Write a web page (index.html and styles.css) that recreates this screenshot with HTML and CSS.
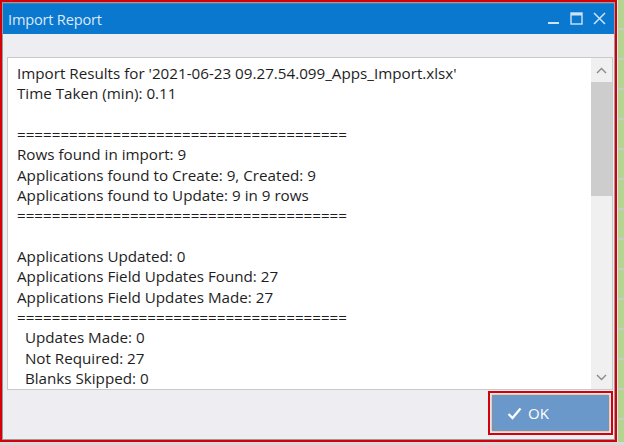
FILE: index.html
```
<!DOCTYPE html>
<html>
<head>
  <title>Import Report</title>
  <link rel="stylesheet" href="styles.css">
</head>
<body>
  <div class="screen">
    <div class="window">
      <div class="titlebar">
        <span class="title">Import Report</span>
        <div class="controls">
          <svg width="12" height="14" viewBox="0 0 12 14"><rect x="0" y="10" width="11" height="2" fill="#cfe3f6"/></svg>
          <svg width="13" height="14" viewBox="0 0 13 14"><rect x="1" y="1" width="11" height="11" fill="none" stroke="#cfe3f6" stroke-width="1.4"/><rect x="1" y="1" width="11" height="2.5" fill="#cfe3f6"/></svg>
          <svg width="13" height="14" viewBox="0 0 13 14"><path d="M1 1 L12 12 M12 1 L1 12" stroke="#cfe3f6" stroke-width="1.5"/></svg>
        </div>
      </div>

      <div class="body">
        <div class="report">
          <div class="report-text">Import Results for '2021-06-23 09.27.54.099_Apps_Import.xlsx'
Time Taken (min): 0.11

======================================
Rows found in import: 9
Applications found to Create: 9, Created: 9
Applications found to Update: 9 in 9 rows
======================================

Applications Updated: 0
Applications Field Updates Found: 27
Applications Field Updates Made: 27
======================================
  Updates Made: 0
  Not Required: 27
  Blanks Skipped: 0</div>
          <div class="scrollbar">
            <div class="arrow">
              <svg width="11" height="7" viewBox="0 0 11 7"><path d="M1 6 L5.5 1.5 L10 6" fill="none" stroke="#8a8a8a" stroke-width="1.4"/></svg>
            </div>
            <div class="thumb"></div>
            <div class="track"></div>
            <div class="arrow">
              <svg width="11" height="7" viewBox="0 0 11 7"><path d="M1 1 L5.5 5.5 L10 1" fill="none" stroke="#8a8a8a" stroke-width="1.4"/></svg>
            </div>
          </div>
        </div>

        <div class="footer">
          <div class="ok-mark">
            <button class="ok-btn">
              <svg width="15" height="13" viewBox="0 0 15 13"><path d="M1.5 7 L5.5 11 L13.5 1.5" fill="none" stroke="#fff" stroke-width="2.2"/></svg>
              <span>OK</span>
            </button>
          </div>
        </div>
      </div>
    </div>
    <div class="side"></div>
  </div>
</body>
</html>
```

FILE: styles.css
```
body {
  margin: 0;
  background: #d9d9d9;
  font-family: "Open Sans", "Noto Sans", sans-serif;
}

.screen {
  display: flex;
  width: 624px;
  height: 445px;
  overflow: hidden;
}

.window {
  width: 617px;
  height: 442px;
  box-sizing: border-box;
  border: 2px solid #d4000a;
  box-shadow: inset 0 0 0 1px #9a9a9a;
  padding: 1px;
  background: #eeedf2;
  display: flex;
  flex-direction: column;
}

.side {
  flex: 1;
  height: 442px;
  border-left: 1px solid #e8e8e8;
  background: repeating-linear-gradient(180deg, #b3d58f 0, #b3d58f 28px, #c9cbc5 28px, #c9cbc5 30px);
}

.titlebar {
  height: 31px;
  background: #0a78cf;
  box-shadow: inset 0 1px 0 #4a7fb4;
  display: flex;
  align-items: center;
  justify-content: space-between;
  padding: 0 8px 0 5px;
}

.title {
  color: #dbe9f7;
  font-size: 14.6px;
  letter-spacing: -0.2px;
}

.controls {
  display: flex;
  gap: 10px;
  align-items: center;
}

.body {
  flex: 1;
  display: flex;
  flex-direction: column;
  padding: 23px 1px 0 4px;
}

.report {
  height: 333px;
  box-sizing: border-box;
  border: 1px solid #c9c9c9;
  background: #fff;
  display: flex;
}

.report-text {
  flex: 1;
  white-space: pre;
  overflow: hidden;
  font-size: 15.2px;
  line-height: 20.35px;
  color: #1e1e1e;
  padding: 5px 0 0 9px;
}

.scrollbar {
  width: 21px;
  background: #f0f0f0;
  display: flex;
  flex-direction: column;
}

.arrow {
  height: 24px;
  display: flex;
  align-items: center;
  justify-content: center;
}

.thumb {
  height: 114px;
  background: #cdcdcd;
}

.track {
  flex: 1;
}

.footer {
  flex: 1;
  display: flex;
  justify-content: flex-end;
  align-items: flex-start;
  padding-top: 1px;
}

.ok-mark {
  border: 2px solid #d4000a;
  padding: 2px;
}

.ok-btn {
  width: 117px;
  height: 36px;
  background: #6b98cb;
  border: 1px solid #8b8f98;
  box-shadow: 0 0 2px #9a9a9a;
  color: #fff;
  font-family: "Open Sans", "Noto Sans", sans-serif;
  font-size: 15px;
  display: flex;
  align-items: center;
  gap: 6px;
  padding: 0 0 0 14px;
}
```
